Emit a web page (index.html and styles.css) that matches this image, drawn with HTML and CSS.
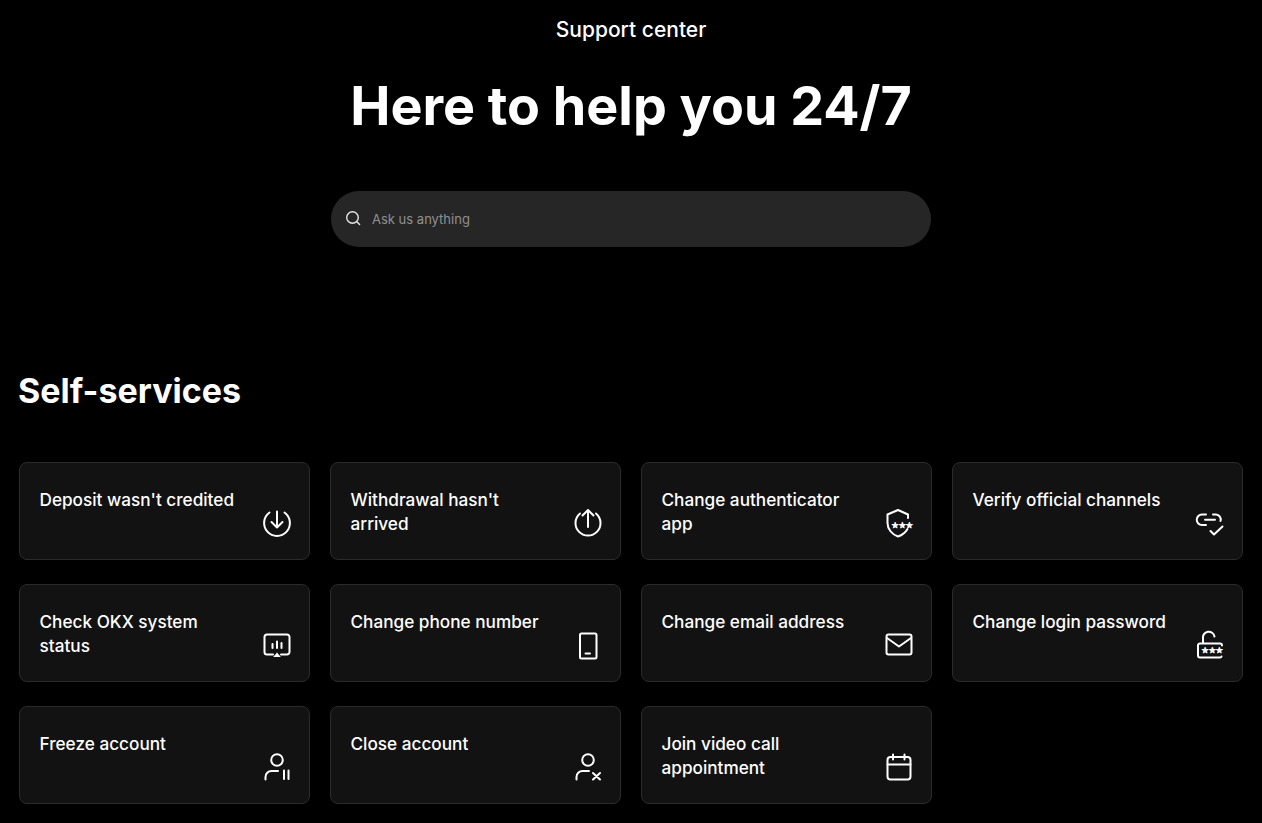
FILE: index.html
```html
<!DOCTYPE html>
<html lang="en">
<head>
<meta charset="utf-8">
<title>Support center</title>
<link rel="stylesheet" href="styles.css">
</head>
<body>
<header class="hero">
  <p class="eyebrow">Support center</p>
  <h1 class="title">Here to help you 24/7</h1>
  <div class="search">
    <svg class="search-icon" viewBox="0 0 16 16" fill="none" stroke="currentColor" stroke-width="1.4" stroke-linecap="round"><circle cx="7.5" cy="7.5" r="5.8"/><path d="M11.8 11.8 14.6 14.6"/></svg>
    <span class="search-text">Ask us anything</span>
  </div>
</header>
<main class="services">
  <h2 class="section-title">Self-services</h2>
  <div class="grid">
    <a class="card"><span class="card-text">Deposit wasn't credited</span>
      <svg class="icon" viewBox="0 0 32 32"><path d="M8.500 5.500A12.900 12.900 0 1 0 23.500 5.500"/><path d="M16 4.500V20.500M10.500 15 16 20.500 21.500 15"/></svg></a>
    <a class="card"><span class="card-text">Withdrawal hasn't arrived</span>
      <svg class="icon" viewBox="0 0 32 32"><path d="M8 6.500A12.500 12.500 0 1 0 24 6.500"/><path d="M16 3V20M10.500 8.500 16 3 21.500 8.500"/></svg></a>
    <a class="card"><span class="card-text">Change authenticator app</span>
      <svg class="icon" viewBox="0 0 32 32"><path d="M25 11V7.500L15 3 4.500 7.500V16C4.500 22 9 27.500 15 29.500 19 28.200 22.500 25.500 24.500 22"/><text class="stars" x="8.500" y="20.500">★★★</text></svg></a>
    <a class="card"><span class="card-text">Verify official channels</span>
      <svg class="icon" viewBox="0 0 32 32"><path d="M12 7.500H8a5 5 0 0 0 0 10.500h4M19 7.500h3a5 5 0 0 1 4.500 6.500M11 12.700h10M16.500 24l3.500 3.500 8.500-8"/></svg></a>
    <a class="card"><span class="card-text">Check OKX system status</span>
      <svg class="icon" viewBox="0 0 32 32"><path d="M12 25.500H6a2.500 2.500 0 0 1-2.500-2.500V8A2.500 2.500 0 0 1 6 5.500h20A2.500 2.500 0 0 1 28.500 8v15a2.500 2.500 0 0 1-2.500 2.500h-6M11.500 15v4M16 12.500V19M20.500 14v5"/><path class="fill" d="M16 23.500l3.800 4.500h-7.600z"/></svg></a>
    <a class="card"><span class="card-text">Change phone number</span>
      <svg class="icon" viewBox="0 0 32 32"><rect x="8" y="4.500" width="16.500" height="25" rx="1.500"/><path d="M13.500 24.500h4.500"/></svg></a>
    <a class="card"><span class="card-text">Change email address</span>
      <svg class="icon" viewBox="0 0 32 32"><rect x="3.500" y="5.500" width="25" height="20" rx="2"/><path d="M4 9 16 17.500 28 9"/></svg></a>
    <a class="card"><span class="card-text">Change login password</span>
      <svg class="icon" viewBox="0 0 32 32"><path d="M9 14V9.500A5.800 5.800 0 0 1 20.500 7.500M27.500 27.500A1.500 1.500 0 0 1 26 28.500H6A2 2 0 0 1 4 26.500V16A2 2 0 0 1 6 14.500H26A2 2 0 0 1 28 16.500"/><text class="stars" x="7.500" y="24">★★★</text></svg></a>
    <a class="card"><span class="card-text">Freeze account</span>
      <svg class="icon" viewBox="0 0 32 32"><circle cx="16" cy="9" r="5.800"/><path d="M4.500 28.500V26a6 6 0 0 1 6-6H17M23 19.500V28M27.500 19.500V28"/></svg></a>
    <a class="card"><span class="card-text">Close account</span>
      <svg class="icon" viewBox="0 0 32 32"><circle cx="16" cy="9" r="5.800"/><path d="M4.500 28.500V26a6 6 0 0 1 6-6H17M21 22l7 6.500M28 22l-7 6.500"/></svg></a>
    <a class="card"><span class="card-text">Join video call appointment</span>
      <svg class="icon" viewBox="0 0 32 32"><rect x="4.500" y="6" width="23" height="22.500" rx="3"/><path d="M4.500 13.500h23M10 3.500v5M21.500 3.500v5"/></svg></a>
  </div>
</main>
</body>
</html>
```
FILE: styles.css
```css
* { box-sizing: border-box; }
html, body { margin: 0; height: 100%; }
body {
  background: #000;
  color: #fff;
  font-family: Inter, "Liberation Sans", sans-serif;
  overflow: hidden;
}
.hero {
  display: flex;
  flex-direction: column;
  align-items: center;
  padding-top: 16px;
}
.eyebrow {
  margin: 0;
  font-size: 21px;
  line-height: 28px;
  font-weight: 500;
}
.title {
  margin: 26px 0 0;
  font-size: 53.800px;
  line-height: 72px;
  font-weight: 700;
}
.search {
  display: flex;
  align-items: center;
  gap: 11px;
  width: 600px;
  height: 56px;
  margin-top: 49px;
  padding: 0 14px;
  background: #262626;
  border-radius: 28px;
}
.search-icon { width: 16px; height: 16px; color: #e6e6e6; margin-top: -2px; }
.search-text { font-size: 13px; color: #909090; }
.services { padding: 124px 19px 0; }
.section-title {
  margin: 0 0 0 -1px;
  font-size: 34px;
  line-height: 40px;
  font-weight: 700;
}
.grid {
  display: grid;
  grid-template-columns: repeat(4, 291px);
  grid-auto-rows: 98px;
  gap: 24px 20px;
  margin-top: 51px;
}
.card {
  display: flex;
  justify-content: space-between;
  gap: 24px;
  padding: 25px 16px 20px 19.500px;
  background: #121212;
  border: 1px solid #2b2b2b;
  border-radius: 8px;
}
.card-text {
  font-size: 17.200px;
  line-height: 24px;
  font-weight: 500;
}
.icon {
  flex: none;
  align-self: flex-end;
  width: 32px;
  height: 32px;
  fill: none;
  stroke: #fff;
  stroke-width: 2;
  stroke-linecap: round;
  stroke-linejoin: round;
}
.icon .fill { fill: #fff; stroke: none; }
.icon .stars {
  fill: #fff;
  stroke: #fff;
  stroke-width: 0.7;
  font-family: "DejaVu Sans", sans-serif;
  font-size: 8px;
}
```
